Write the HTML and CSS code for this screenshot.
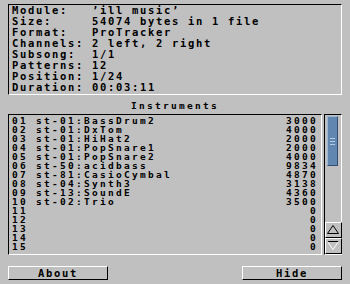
FILE: index.html
```html
<!DOCTYPE html>
<html lang="en">
<head>
    <meta charset="UTF-8">
    <title>Module Info</title>
    <link rel="stylesheet" href="styles.css">
</head>
<body>
    <div class="window">
        <!-- Module details -->
        <div class="info">
            <div class="info-row"><span class="label">Module:</span><span>’ill music’</span></div>
            <div class="info-row"><span class="label">Size:</span><span>54074 bytes in 1 file</span></div>
            <div class="info-row"><span class="label">Format:</span><span>ProTracker</span></div>
            <div class="info-row"><span class="label">Channels:</span><span>2 left, 2 right</span></div>
            <div class="info-row"><span class="label">Subsong:</span><span>1/1</span></div>
            <div class="info-row"><span class="label">Patterns:</span><span>12</span></div>
            <div class="info-row"><span class="label">Position:</span><span>1/24</span></div>
            <div class="info-row"><span class="label">Duration:</span><span>00:03:11</span></div>
        </div>

        <div class="title">Instruments</div>

        <!-- Instrument list with scroller -->
        <div class="instruments">
            <div class="list">
                <div class="row"><span>01 st-01:BassDrum2</span><span>3000</span></div>
                <div class="row"><span>02 st-01:DxTom</span><span>4000</span></div>
                <div class="row"><span>03 st-01:HiHat2</span><span>2000</span></div>
                <div class="row"><span>04 st-01:PopSnare1</span><span>2000</span></div>
                <div class="row"><span>05 st-01:PopSnare2</span><span>4000</span></div>
                <div class="row"><span>06 st-50:acidbass</span><span>9834</span></div>
                <div class="row"><span>07 st-81:CasioCymbal</span><span>4870</span></div>
                <div class="row"><span>08 st-04:Synth3</span><span>3138</span></div>
                <div class="row"><span>09 st-13:SoundE</span><span>4360</span></div>
                <div class="row"><span>10 st-02:Trio</span><span>3500</span></div>
                <div class="row"><span>11</span><span>0</span></div>
                <div class="row"><span>12</span><span>0</span></div>
                <div class="row"><span>13</span><span>0</span></div>
                <div class="row"><span>14</span><span>0</span></div>
                <div class="row"><span>15</span><span>0</span></div>
            </div>
            <div class="scroller">
                <div class="knob"><span class="grip"></span></div>
                <div class="arrow">
                    <svg width="14" height="14" viewBox="0 0 14 14">
                        <path d="M1.5 10.5 L7 2.5 L12.5 10.5" fill="none" stroke="#000" stroke-width="1"/>
                        <path d="M1.5 10.5 H12.5" stroke="#000" stroke-width="1"/>
                    </svg>
                </div>
                <div class="arrow">
                    <svg width="14" height="14" viewBox="0 0 14 14">
                        <path d="M1.5 2.5 H12.5" stroke="#000" stroke-width="1"/>
                        <path d="M1.5 2.5 L7 10.5 L12.5 2.5" fill="none" stroke="#fff" stroke-width="1"/>
                    </svg>
                </div>
            </div>
        </div>

        <div class="buttons">
            <button class="btn">About</button>
            <button class="btn">Hide</button>
        </div>
    </div>
</body>
</html>
```

FILE: styles.css
```css
body {
    margin: 0;
    background: #c0c0c0;
    color: #000;
    font-family: "DejaVu Sans Mono", "Liberation Mono", monospace;
    font-weight: bold;
}

.window {
    padding: 4px 8px 0 8px;
}

.info {
    border: 1px solid;
    border-color: #000 #fff #fff #000;
    padding: 0 0 1px 3px;
    font-size: 10.5px;
    line-height: 11px;
    letter-spacing: 1.68px;
}

.info-row {
    display: grid;
    grid-template-columns: 80px 1fr;
    white-space: pre;
}

.title {
    margin: 6px 0 4px;
    text-align: center;
    font-size: 9.5px;
    line-height: 9px;
    letter-spacing: 2.28px;
}

.instruments {
    display: flex;
    gap: 2px;
}

.list {
    flex: 1;
    border: 1px solid;
    border-color: #000 #fff #fff #000;
    padding: 1px 3px 3px 3px;
    font-size: 9.5px;
    line-height: 9px;
    letter-spacing: 2.28px;
}

.row {
    display: flex;
    justify-content: space-between;
    white-space: pre;
}

.scroller {
    width: 16px;
    display: flex;
    flex-direction: column;
    border: 1px solid;
    border-color: #000 #fff #fff #000;
}

.knob {
    width: 9px;
    height: 48px;
    margin: 1px 0 0 2px;
    background: #6187b0;
    border: 1px solid;
    border-color: #9cb8d6 #34506e #34506e #9cb8d6;
    display: flex;
    align-items: center;
    justify-content: center;
}

.grip {
    width: 5px;
    height: 7px;
    background: repeating-linear-gradient(#b4cbe3 0 1px, transparent 1px 3px);
}

.arrow {
    height: 14px;
    border: 1px solid;
    border-color: #fff #000 #000 #fff;
    margin-right: -1px;
    display: flex;
}

.arrow:first-of-type {
    margin-top: auto;
}

.knob + .arrow {
    margin-top: auto;
}

.buttons {
    display: flex;
    justify-content: space-between;
    margin-top: 11px;
}

.btn {
    width: 100px;
    height: 14px;
    padding: 0;
    background: #c0c0c0;
    border: 1px solid;
    border-color: #fff #000 #000 #fff;
    font-family: inherit;
    font-weight: bold;
    font-size: 10.5px;
    line-height: 12px;
    letter-spacing: 1.68px;
    color: #000;
}
```
